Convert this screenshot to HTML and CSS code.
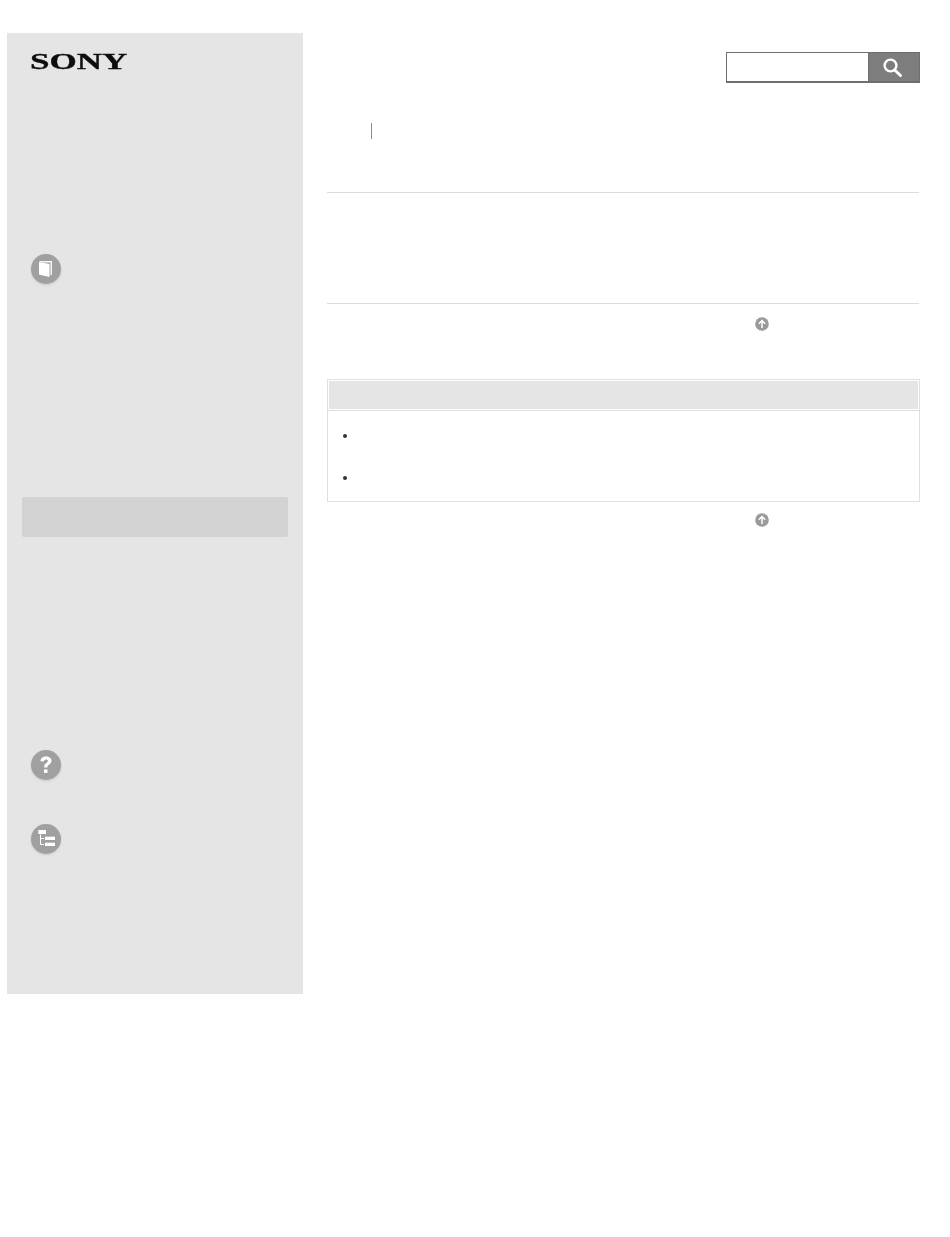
FILE: index.html
```html
<!DOCTYPE html>
<html lang="en">
<head>
<meta charset="utf-8">
<title>Help Guide</title>
<link rel="stylesheet" href="styles.css">
</head>
<body>
<div class="page">
  <aside class="sidebar">
    <div class="logo"><span class="logo-text">SONY</span></div>
    <div class="nav-icon nav-icon-book">
      <svg viewBox="0 0 32 34" width="32" height="34">
        <defs><filter id="s1" x="-20%" y="-20%" width="140%" height="140%"><feGaussianBlur stdDeviation="0.8"/></filter></defs>
        <circle cx="16" cy="17" r="15.2" fill="#000" opacity=".1" filter="url(#s1)"/>
        <circle cx="16" cy="16" r="15" fill="#a0a0a0"/>
        <path d="M9 8h13v14h-1.500V9.500H11z" fill="#fff" opacity=".9"/>
        <path d="M9 9l10.500 2v13L9 21.500z" fill="#fff"/>
      </svg>
    </div>
    <div class="nav-active"></div>
    <div class="nav-icon nav-icon-help">
      <svg viewBox="0 0 32 34" width="32" height="34">
        <circle cx="16" cy="17" r="15.2" fill="#000" opacity=".1" filter="url(#s1)"/>
        <circle cx="16" cy="16" r="15" fill="#a0a0a0"/>
        <path d="M10.500 12.200c0-3 2.300-4.700 5.500-4.700 3.200 0 5.500 1.700 5.500 4.300 0 2-1.200 3-2.600 4-1.100.8-1.400 1.300-1.400 2.700h-3.400c0-2.300.7-3.500 2.200-4.600 1.100-.8 1.600-1.200 1.600-2 0-.9-.7-1.500-1.900-1.500-1.300 0-2 .8-2.100 2z" fill="#fff"/>
        <rect x="14" y="20.400" width="3.500" height="3.500" fill="#fff"/>
      </svg>
    </div>
    <div class="nav-icon nav-icon-tree">
      <svg viewBox="0 0 32 34" width="32" height="34">
        <circle cx="16" cy="17" r="15.2" fill="#000" opacity=".1" filter="url(#s1)"/>
        <circle cx="16" cy="16" r="15" fill="#a0a0a0"/>
        <rect x="8.300" y="7" width="7.700" height="4" fill="#fff"/>
        <rect x="15" y="13.700" width="10" height="3.300" fill="#fff"/>
        <rect x="15" y="19.700" width="10" height="3.300" fill="#fff"/>
        <path d="M10.500 11.500V21.500H14M10.500 15.500H14" fill="none" stroke="#fff" stroke-width="1"/>
      </svg>
    </div>
  </aside>
  <main class="content">
    <div class="search">
      <div class="search-input"></div>
      <div class="search-button">
        <svg viewBox="0 0 24 24" width="24" height="24">
          <circle cx="8.500" cy="10.500" r="5.900" fill="none" stroke="#fff" stroke-width="2.400"/>
          <path d="M12.700 15l5.800 5.500" fill="none" stroke="#fff" stroke-width="3" stroke-linecap="round"/>
        </svg>
      </div>
    </div>
    <div class="crumbs"><span class="crumb-sep"></span></div>
    <div class="band"></div>
    <div class="to-top to-top-first">
      <svg class="up" viewBox="0 0 14 14" width="14" height="14">
        <circle cx="7" cy="7" r="6.800" fill="#9a9a9a"/>
        <path d="M7 11V3.500M3.800 6.800L7 3.500l3.200 3.300" fill="none" stroke="#fff" stroke-width="1.500"/>
      </svg>
    </div>
    <section class="panel">
      <div class="panel-head"></div>
      <ul class="panel-list">
        <li class="panel-item panel-item-tall"></li>
        <li class="panel-item"></li>
      </ul>
    </section>
    <div class="to-top to-top-last">
      <svg class="up" viewBox="0 0 14 14" width="14" height="14">
        <circle cx="7" cy="7" r="6.800" fill="#9a9a9a"/>
        <path d="M7 11V3.500M3.800 6.800L7 3.500l3.200 3.300" fill="none" stroke="#fff" stroke-width="1.500"/>
      </svg>
    </div>
  </main>
</div>
</body>
</html>
```
FILE: styles.css
```css
html, body {
  margin: 0;
  padding: 0;
  background: #fff;
}
.page {
  display: flex;
  align-items: flex-start;
  height: 1237px;
  box-sizing: border-box;
  padding: 33px 30px 0 7px;
  gap: 24px;
  overflow: hidden;
}
.sidebar {
  flex: 0 0 296px;
  height: 961px;
  background: #e5e5e5;
  box-sizing: border-box;
  padding: 20px 15px 0 15px;
  display: flex;
  flex-direction: column;
  align-items: flex-start;
}
.logo {
  height: 16px;
  margin-left: 8px;
  width: 96px;
}
.logo-text {
  display: block;
  font-family: "Liberation Serif", serif;
  font-weight: 700;
  font-size: 24px;
  line-height: 16px;
  color: #0d0d0d;
  -webkit-text-stroke: 0.3px #0d0d0d;
  transform: scaleX(1.46);
  transform-origin: left center;
}
.nav-icon {
  margin-left: 8px;
  height: 34px;
  width: 32px;
}
.nav-icon svg { display: block; }
.nav-icon-book { margin-top: 184px; }
.nav-active {
  width: 266px;
  height: 40px;
  margin-top: 210px;
  background: #d2d2d2;
  border-radius: 2px;
}
.nav-icon-help { margin-top: 212px; }
.nav-icon-tree { margin-top: 40px; }
.content {
  flex: 0 0 592px;
  display: flex;
  flex-direction: column;
}
.search {
  align-self: flex-end;
  margin-top: 19px;
  margin-right: -1px;
  width: 194px;
  height: 31px;
  box-sizing: border-box;
  display: flex;
  border: 1px solid #6e6e6e;
  border-bottom-width: 2px;
}
.search-input {
  flex: 1;
  background: #fff;
}
.search-button {
  width: 50px;
  background: #7d7d7d;
  border-left: 1px solid #6e6e6e;
  display: flex;
  align-items: center;
  justify-content: center;
}
.search-button svg { display: block; }
.crumbs {
  height: 16px;
  margin-top: 40px;
}
.crumb-sep {
  display: block;
  width: 1px;
  height: 16px;
  margin-left: 44px;
  background: #8c8c8c;
}
.band {
  margin-top: 53px;
  height: 110px;
  border-top: 1px solid #dcdcdc;
  border-bottom: 1px solid #dcdcdc;
}
.to-top {
  display: flex;
  padding-left: 428px;
}
.up { display: block; }
.to-top-first { margin-top: 13px; }
.panel {
  margin-top: 48px;
  margin-right: -1px;
  border: 1px solid #e0e0e0;
  height: 123px;
  box-sizing: border-box;
}
.panel-head {
  height: 28px;
  margin: 1px 1px 0 1px;
  background: #e5e5e5;
  border-bottom: 1px solid #fff;
}
.panel-list {
  list-style: none;
  margin: 0;
  padding: 0;
  border-top: 1px solid #e0e0e0;
}
.panel-item {
  position: relative;
  height: 24px;
}
.panel-item-tall { height: 42px; }
.panel-item::before {
  content: "";
  position: absolute;
  left: 15px;
  top: 23px;
  width: 4px;
  height: 4px;
  border-radius: 50%;
  background: #333;
}
.to-top-last { margin-top: 11px; }
```
